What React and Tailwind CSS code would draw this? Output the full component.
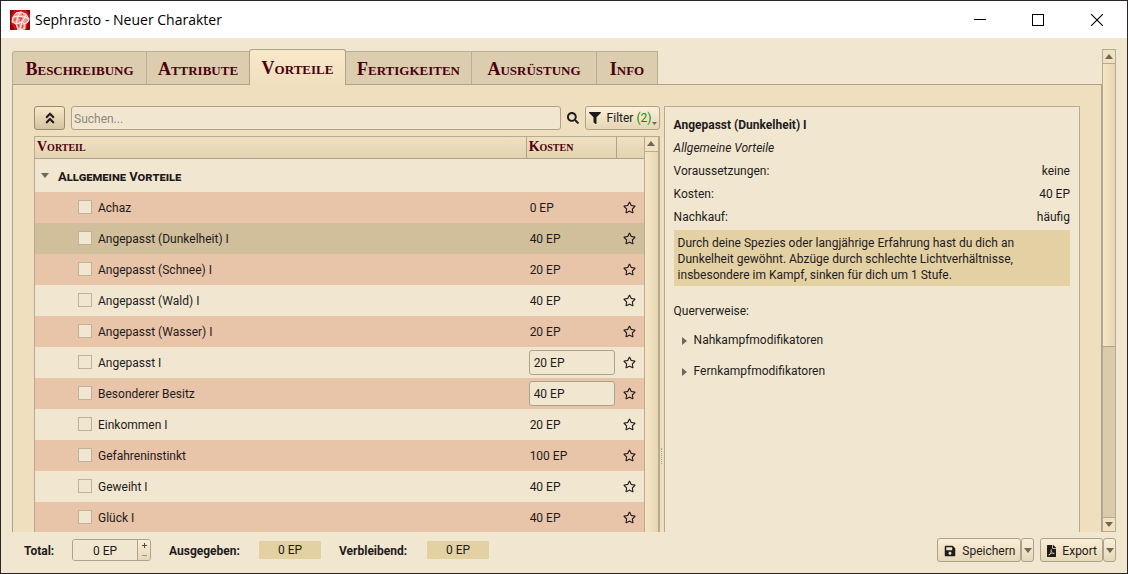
import {
  FaAngleDoubleUp,
  FaFilePdf,
  FaFilter,
  FaRegStar,
  FaSave,
  FaSearch,
} from "react-icons/fa";

const tabs = ["Beschreibung", "Attribute", "Vorteile", "Fertigkeiten", "Ausrüstung", "Info"];
const tabWidths = ["w-[135px]", "w-[102px]", "w-[97px]", "w-[126px]", "w-[125px]", "w-[61px]"];

const rows = [
  { name: "Achaz", cost: "0 EP" },
  { name: "Angepasst (Dunkelheit) I", cost: "40 EP", selected: true },
  { name: "Angepasst (Schnee) I", cost: "20 EP" },
  { name: "Angepasst (Wald) I", cost: "40 EP" },
  { name: "Angepasst (Wasser) I", cost: "20 EP" },
  { name: "Angepasst I", cost: "20 EP", editable: true },
  { name: "Besonderer Besitz", cost: "40 EP", editable: true },
  { name: "Einkommen I", cost: "20 EP" },
  { name: "Gefahreninstinkt", cost: "100 EP" },
  { name: "Geweiht I", cost: "40 EP" },
  { name: "Glück I", cost: "40 EP" },
];

const facts = [
  ["Voraussetzungen:", "keine"],
  ["Kosten:", "40 EP"],
  ["Nachkauf:", "häufig"],
];

function Triangle({ dir, className }) {
  const points = {
    up: "0,5 4,0 8,5",
    down: "0,0 8,0 4,5",
    right: "0,0 5,4 0,8",
  }[dir];
  return (
    <svg
      viewBox={dir === "right" ? "0 0 5 8" : "0 0 8 5"}
      className={`shrink-0 ${className}`}
      aria-hidden="true"
    >
      <polygon points={points} fill="#6e685b" />
    </svg>
  );
}

function Logo() {
  return (
    <svg viewBox="0 0 20 20" className="size-5" aria-hidden="true">
      <rect width="20" height="20" fill="#d01013" />
      <path d="M0 0h4L1 6v8l3 3v3H0zM16 0h4v5zM18 13l2-3v10h-4z" fill="#8c0608" />
      <path d="M6 3l5-1 5 2 3 5-1 3-3 2v5l-7 1-2-6-4-2 1-5z" fill="#f29a96" />
      <path
        d="M6 3l5-1 5 2 3 5-1 3-3 2v5l-7 1-2-6-4-2 1-5zM3 7l5-1 3-4M8 6l7 1 1-3M8 6l-2 8M15 7l4 2M15 7l-3 5-6 2M12 12l3 2M12 12l-2 7"
        fill="none"
        stroke="#fff4f1"
        strokeWidth="1"
      />
      <path d="M9 8l3 0-2 3M5 8l0 3M8 14l1 3M13 15l-1 3M12 4l1 1" fill="none" stroke="#d42a2a" strokeWidth="1" />
    </svg>
  );
}

function TitleBar() {
  return (
    <header className="flex h-[37px] shrink-0 items-center bg-white pl-[9px] text-black">
      <Logo />
      <h1 className="grow pl-[5px] font-['Open_Sans',sans-serif] text-sm">Sephrasto - Neuer Charakter</h1>
      <button aria-label="Minimieren" className="flex h-full w-[58px] items-center justify-center">
        <svg viewBox="0 0 12 12" className="size-3">
          <path d="M0 5.5h12" stroke="#000" />
        </svg>
      </button>
      <button aria-label="Maximieren" className="flex h-full w-[58px] items-center justify-center">
        <svg viewBox="0 0 12 12" className="size-3">
          <rect x=".5" y=".5" width="11" height="11" fill="none" stroke="#000" />
        </svg>
      </button>
      <button aria-label="Schließen" className="flex h-full w-[60px] items-center justify-center">
        <svg viewBox="0 0 12 12" className="size-3">
          <path d="M0 0l12 12M12 0L0 12" stroke="#000" strokeWidth="1.1" />
        </svg>
      </button>
    </header>
  );
}

function TabBar() {
  return (
    <div role="tablist" className="flex items-end">
      {tabs.map((tab, i) => {
        const active = tab === "Vorteile";
        return (
          <button
            key={tab}
            role="tab"
            aria-selected={active}
            className={`${tabWidths[i]} text-center font-['Liberation_Serif',serif] text-lg leading-none font-bold whitespace-nowrap text-[#4b0010] [font-variant-caps:small-caps] ${
              active
                ? "relative -mb-px h-9 rounded-t-[3px] border border-b-0 border-[#aca38d] bg-linear-to-b from-[#f9e9c9] to-[#efdfbf]"
                : `h-[33px] border-t border-r border-[#b9ad93] bg-[#dccdae] pt-0.5 ${i === 0 ? "rounded-tl-[3px] border-l" : ""} ${i === 1 ? "border-r-0" : ""}`
            }`}
          >
            {tab}
          </button>
        );
      })}
    </div>
  );
}

function Toolbar() {
  return (
    <div className="flex h-6 items-stretch">
      <button
        aria-label="Alle einklappen"
        className="flex w-[31px] items-center justify-center rounded-[3px] border border-[#958c78] bg-linear-to-b from-[#f8e8c8] to-[#d5c4a2]"
      >
        <FaAngleDoubleUp className="size-3.5" />
      </button>
      <input
        type="search"
        aria-label="Suchen"
        placeholder="Suchen..."
        className="ml-1.5 min-w-0 grow rounded-[3px] border border-[#aca38d] bg-[#f1e7d1] px-0.5 pt-0.5 outline-none placeholder:text-[#8f887a]"
      />
      <button aria-label="Suche starten" className="flex w-6 items-center justify-center">
        <FaSearch className="size-3" />
      </button>
      <button className="flex w-[75px] items-center rounded-[3px] border border-[#aca38d] bg-linear-to-b from-[#fbf0d8] to-[#e4d5b5] pt-px pl-[3px] whitespace-nowrap">
        <FaFilter className="size-3" />
        <span className="pl-1.5">
          Filter <span className="text-[#108a10]">(2)</span>
        </span>
        <Triangle dir="down" className="mb-1 ml-px h-[3px] w-[5px] self-end" />
      </button>
    </div>
  );
}

function AdvantageRow({ row, index }) {
  const background = row.selected ? "bg-[#d1be9a]" : index % 2 === 0 ? "bg-[#e8c4a9]" : "bg-[#f1e7d1]";
  return (
    <tr className={`h-[31px] ${background}`}>
      <td className="p-0">
        <label className="flex items-center pl-[43px]">
          <input
            type="checkbox"
            className="size-3.5 shrink-0 appearance-none border border-[#bdb29a] bg-[#f1e7d1]"
          />
          <span className="pt-0.5 pl-1.5">{row.name}</span>
        </label>
      </td>
      <td className="p-0">
        {row.editable ? (
          <input
            aria-label={`Kosten ${row.name}`}
            defaultValue={row.cost}
            className="ml-[3px] block h-[25px] w-[86px] rounded-[3px] border border-[#aca38d] bg-[#f1e7d1] px-1 pt-0.5 outline-none"
          />
        ) : (
          <span className="block pt-0.5 pl-1">{row.cost}</span>
        )}
      </td>
      <td className="p-0">
        <button aria-label={`${row.name} als Favorit`} className="mx-auto block pt-px">
          <FaRegStar className="size-[13px]" />
        </button>
      </td>
    </tr>
  );
}

function AdvantageTree() {
  const head =
    "h-[22px] border-b border-[#aca38d] p-0 pl-0.5 text-left font-['Liberation_Serif',serif] text-sm leading-none font-bold text-[#4b0010] [font-variant-caps:small-caps]";
  return (
    <div className="mt-1.5 flex min-h-0 grow overflow-hidden border border-b-0 border-[#b5aa92] bg-[#f1e7d1]">
      <div className="min-w-0 grow">
        <table className="w-full table-fixed border-separate border-spacing-0">
          <colgroup>
            <col />
            <col className="w-[90px]" />
            <col className="w-7" />
          </colgroup>
          <thead>
            <tr className="bg-linear-to-b from-[#f0e0c0] to-[#e2d2b0]">
              <th className={head}>Vorteil</th>
              <th className={`${head} border-l`}>Kosten</th>
              <th className={`${head} border-l`} aria-label="Favorit" />
            </tr>
          </thead>
          <tbody>
            <tr className="h-[33px]">
              <th colSpan={3} className="p-0 text-left">
                <button className="flex items-center pl-1.5">
                  <Triangle dir="down" className="h-[5px] w-2" />
                  <span className="pt-0.5 pl-[9px] text-[13px] font-bold [font-variant-caps:small-caps]">
                    Allgemeine Vorteile
                  </span>
                </button>
              </th>
            </tr>
            {rows.map((row, index) => (
              <AdvantageRow key={row.name} row={row} index={index} />
            ))}
          </tbody>
        </table>
      </div>
      <div className="flex w-[15px] shrink-0 flex-col border-x border-[#b5aa92] bg-linear-to-r from-[#f6e6c5] to-[#e6d6b4]">
        <button
          aria-label="Liste nach oben"
          className="flex h-[15px] items-center justify-center border-b border-[#b5aa92] bg-[#f1e1c0]"
        >
          <Triangle dir="up" className="h-[5px] w-2" />
        </button>
      </div>
    </div>
  );
}

function DetailPanel() {
  return (
    <section className="flex min-w-0 grow flex-col border border-b-0 border-[#b5aa92] bg-[#f1e7d1] px-[9px] pt-[7px]">
      <h2 className="font-bold leading-[23px]">Angepasst (Dunkelheit) I</h2>
      <p className="leading-[23px] italic">Allgemeine Vorteile</p>
      <dl className="leading-[23px]">
        {facts.map(([label, value]) => (
          <div key={label} className="flex justify-between">
            <dt>{label}</dt>
            <dd>{value}</dd>
          </div>
        ))}
      </dl>
      <p className="mt-px bg-[#e3d0a3] px-1 pt-[5px] pr-12 pb-[3px]">
        Durch deine Spezies oder langjährige Erfahrung hast du dich an Dunkelheit gewöhnt. Abzüge durch schlechte
        Lichtverhältnisse, insbesondere im Kampf, sinken für dich um 1 Stufe.
      </p>
      <h3 className="mt-[17px]">Querverweise:</h3>
      <ul className="mt-1.5 leading-[31px]">
        {["Nahkampfmodifikatoren", "Fernkampfmodifikatoren"].map((item) => (
          <li key={item}>
            <button className="flex items-center pl-2">
              <Triangle dir="right" className="h-2 w-[5px]" />
              <span className="pl-[7px]">{item}</span>
            </button>
          </li>
        ))}
      </ul>
    </section>
  );
}

function PageScrollbar() {
  const end = "flex h-3.5 shrink-0 items-center justify-center bg-[#f1e1c0]";
  return (
    <div className="flex w-3.5 shrink-0 flex-col border border-[#b5aa92] bg-[#d9cbab]">
      <button aria-label="Nach oben" className={`${end} border-b border-[#b5aa92]`}>
        <Triangle dir="up" className="h-[5px] w-2" />
      </button>
      <div className="grow-[283] border-b border-[#aca38d] bg-linear-to-r from-[#f6e6c5] to-[#e6d6b4]" />
      <div className="grow-[171]" />
      <button aria-label="Nach unten" className={`${end} border-t border-[#b5aa92]`}>
        <Triangle dir="down" className="h-[5px] w-2" />
      </button>
    </div>
  );
}

function SplitButton({ icon, label, menuLabel }) {
  const face =
    "flex items-center justify-center rounded-[3px] border border-[#aca38d] bg-linear-to-b from-[#faeed6] to-[#e6d8b9] pt-px";
  return (
    <div className="flex h-6">
      <button className={`${face} gap-1.5 pr-[5px] pl-1.5`}>
        {icon}
        {label}
      </button>
      <button aria-label={menuLabel} className={`${face} w-[13px]`}>
        <Triangle dir="down" className="h-[5px] w-2" />
      </button>
    </div>
  );
}

function StatusBar() {
  const value = "w-[62px] bg-[#e3d0a3] text-center leading-[18px]";
  return (
    <footer className="flex h-[41px] shrink-0 items-start pt-1.5 pr-[11px] pl-[23px]">
      <div className="flex h-6 items-center">
        <label htmlFor="total" className="w-12 pt-0.5 font-bold">
          Total:
        </label>
        <div className="flex h-[22px] w-[79px] overflow-hidden rounded-[3px] border border-[#aca38d]">
          <input
            id="total"
            defaultValue="0 EP"
            className="w-16 bg-[#f1e7d1] pt-px text-center outline-none"
          />
          <div className="flex grow flex-col border-l border-[#aca38d] bg-linear-to-b from-[#faeed6] to-[#e6d8b9] text-[#4f493e]">
            <button aria-label="Erhöhen" className="flex grow items-center justify-center">
              <svg viewBox="0 0 5 5" className="size-[5px]">
                <path d="M0 2.5h5M2.5 0v5" stroke="currentColor" />
              </svg>
            </button>
            <button aria-label="Verringern" className="flex grow items-center justify-center opacity-50">
              <svg viewBox="0 0 5 5" className="size-[5px]">
                <path d="M0 2.5h5" stroke="currentColor" />
              </svg>
            </button>
          </div>
        </div>
        <span className="ml-[18px] w-[90px] pt-0.5 font-bold">Ausgegeben:</span>
        <output className={value}>0 EP</output>
        <span className="ml-[18px] w-[88px] pt-0.5 font-bold">Verbleibend:</span>
        <output className={value}>0 EP</output>
      </div>
      <div className="ml-auto flex gap-1.5">
        <SplitButton icon={<FaSave className="size-3" />} label="Speichern" menuLabel="Speichern-Optionen" />
        <SplitButton icon={<FaFilePdf className="h-3 w-[9px]" />} label="Export" menuLabel="Export-Optionen" />
      </div>
    </footer>
  );
}

export default function App() {
  return (
    <div className="flex h-screen flex-col overflow-hidden border border-[#2b2626] bg-[#f1e7d1] font-[Roboto,sans-serif] text-xs text-[#1f1b1b]">
      <TitleBar />
      <main className="flex min-h-0 grow pt-[11px] pr-[11px] pl-[11px]">
        <div className="flex min-w-0 grow flex-col">
          <TabBar />
          <div
            role="tabpanel"
            className="flex min-h-0 grow border border-b-0 border-[#aca38d] bg-[#efdfbf] pt-[21px] pr-[21px] pl-[21px]"
          >
            <div className="flex min-h-0 w-[calc(60%-2px)] shrink-0 flex-col">
              <Toolbar />
              <AdvantageTree />
            </div>
            <div className="flex w-1 shrink-0 items-end justify-center pb-[68px]">
              <div className="h-4 border-l border-dotted border-[#aca38d]" />
            </div>
            <DetailPanel />
          </div>
        </div>
        <PageScrollbar />
      </main>
      <StatusBar />
    </div>
  );
}
